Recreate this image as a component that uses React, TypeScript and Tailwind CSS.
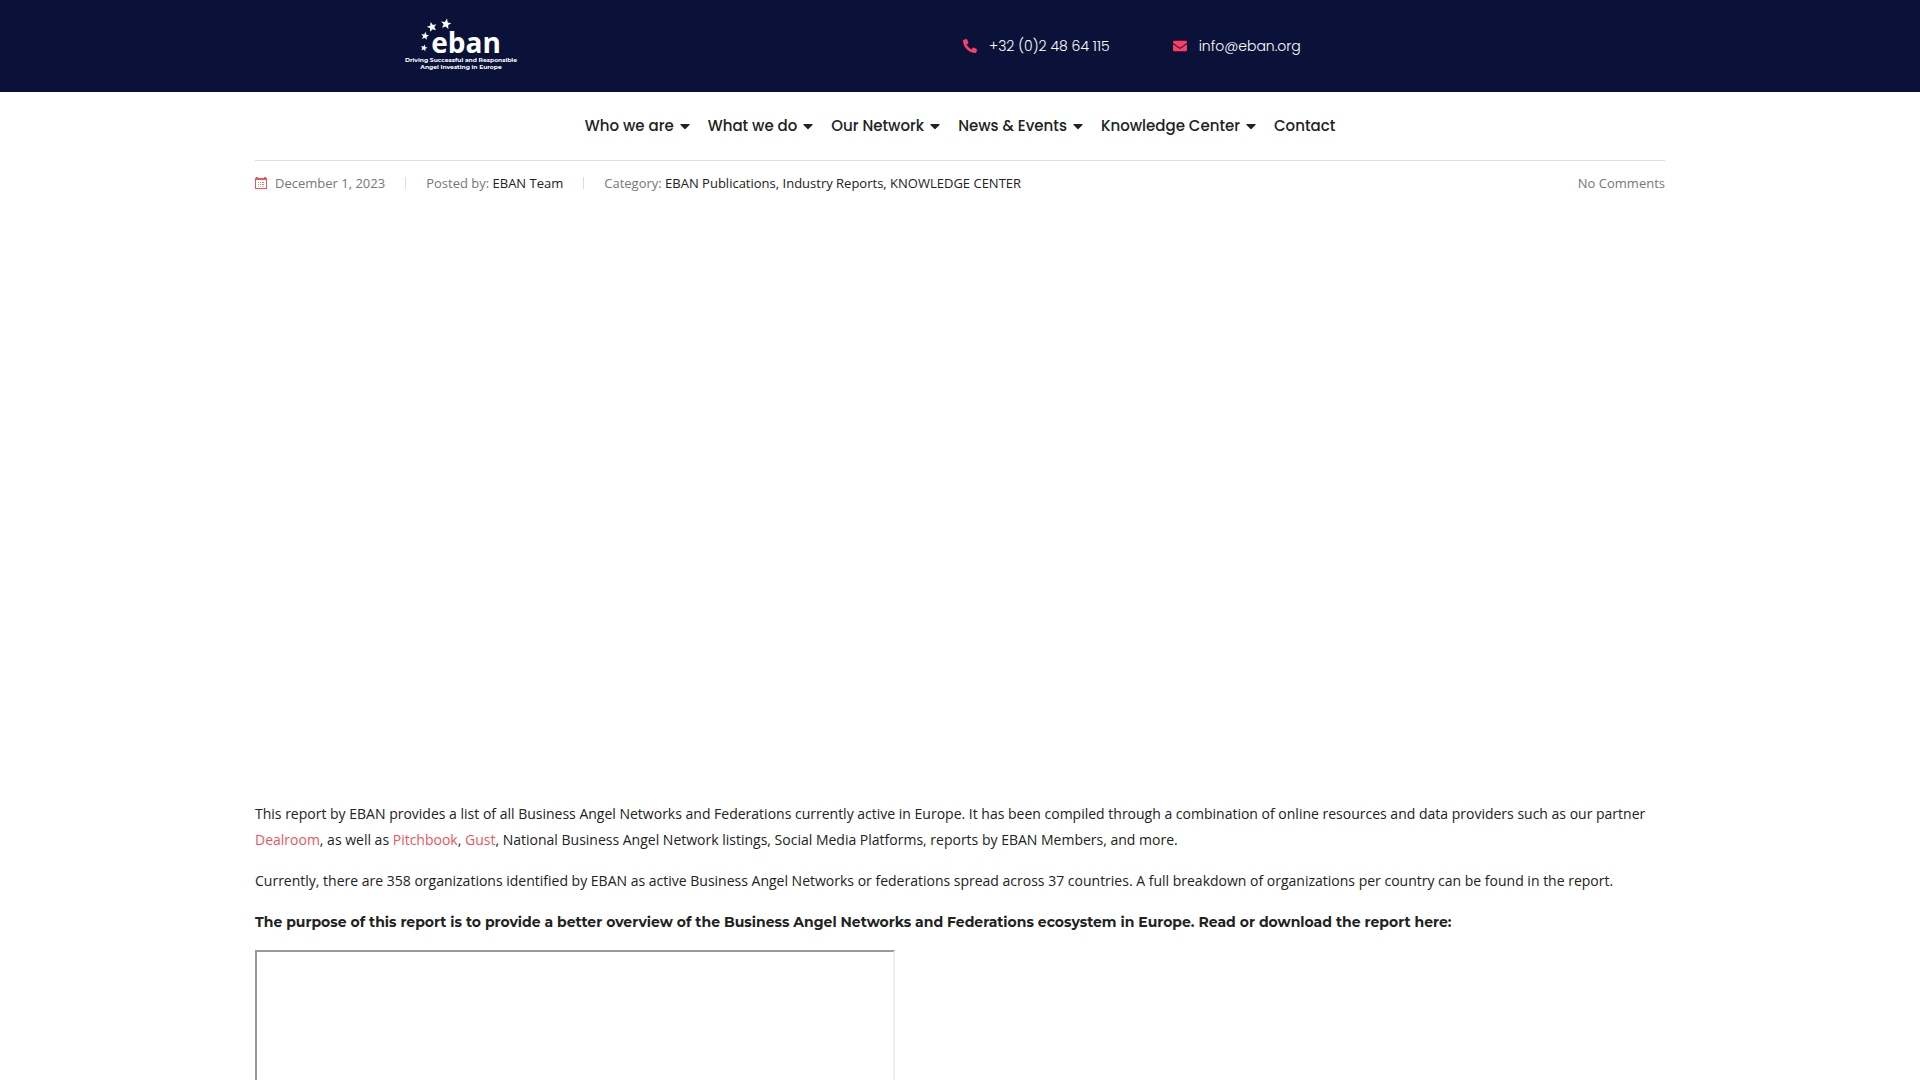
import React from "react";
import { FaCaretDown, FaEnvelope, FaPhoneAlt } from "react-icons/fa";

const menu = [
  { label: "Who we are", sub: true },
  { label: "What we do", sub: true },
  { label: "Our Network", sub: true },
  { label: "News & Events", sub: true },
  { label: "Knowledge Center", sub: true },
  { label: "Contact", sub: false },
];

const STAR =
  "M0 -10 L2.7 -3.4 L9.5 -3.1 L4.2 1.3 L5.9 8.1 L0 4.4 L-5.9 8.1 L-4.2 1.3 L-9.5 -3.1 L-2.7 -3.4 Z";

function Logo() {
  return (
    <svg width="116" height="56" viewBox="0 0 116 56" fill="#fff" role="img" aria-label="eban">
      <path d={STAR} transform="translate(42 6) rotate(10) scale(0.55)" />
      <path d={STAR} transform="translate(28 9) rotate(-15) scale(0.52)" />
      <path d={STAR} transform="translate(21 18) rotate(10) scale(0.42)" />
      <path d={STAR} transform="translate(20 30) rotate(15) scale(0.36)" />
      <text x="62" y="35" textAnchor="middle" className="font-['Open_Sans'] text-[28px] font-bold">
        eban
      </text>
      <text x="57" y="44" textAnchor="middle" className="font-['Montserrat','Inter'] text-[6px] font-bold">
        Driving Successful and Responsible
      </text>
      <text x="57" y="51" textAnchor="middle" className="font-['Montserrat','Inter'] text-[6px] font-bold">
        Angel Investing in Europe
      </text>
    </svg>
  );
}

function CalendarIcon() {
  return (
    <svg width="12" height="12" viewBox="0 0 12 12" fill="#eb5757" aria-hidden="true">
      <path d="M0 1h1v-1h2v1h6v-1h2v1h1v11H0ZM1 3v8h10V3Z" fillRule="evenodd" />
      <path
        opacity="0.8"
        d="M3 5h1v1h-1ZM5 5h1v1h-1ZM7 5h2v1h-2ZM3 7h1v1h-1ZM5 7h1v1h-1ZM7 7h2v1h-2ZM3 9h1v.5h-1ZM5 9h1v.5h-1ZM7 9h2v.5h-2Z"
      />
    </svg>
  );
}

const metaLink = "text-[#222222]";
const textLink = "text-[#eb5757]";

export default function App() {
  return (
    <div className="h-screen overflow-hidden bg-white font-['Open_Sans',sans-serif] text-[#222222]">
      <header className="bg-[#0a123a]">
        <div className="mx-auto grid h-[92px] max-w-[1140px] grid-cols-2 items-center">
          <a href="#home" className="pl-3.5">
            <Logo />
          </a>
          <div className="flex items-center gap-[63px] pl-[3px] font-['Poppins','Inter',sans-serif] text-[14px] font-light text-white">
            <a href="tel:+3224864115" className="flex items-center gap-3 whitespace-nowrap">
              <FaPhoneAlt className="size-3.5 text-[#fb3e61]" />
              +32 (0)2 48 64 115
            </a>
            <a href="mailto:info@eban.org" className="flex items-center gap-3 whitespace-nowrap">
              <FaEnvelope className="size-3.5 text-[#fb3e61]" />
              info@eban.org
            </a>
          </div>
        </div>
      </header>

      <div className="mx-auto max-w-[1410px]">
        <nav className="flex h-[68px] items-center justify-center gap-[18px] font-['Poppins','Inter',sans-serif] text-[15px] font-medium">
          {menu.map((item) => (
            <a key={item.label} href="#menu" className="flex items-center gap-1.5 whitespace-nowrap">
              {item.label}
              {item.sub && <FaCaretDown className="h-4 w-2.5" />}
            </a>
          ))}
        </nav>

        <div className="flex items-center border-t border-[#dddddd] pt-3 text-[13px] leading-5 text-[#777777]">
          <span className="flex items-center gap-2">
            <CalendarIcon />
            December 1, 2023
          </span>
          <span className="mx-5 h-3 border-l border-[#dddddd]" />
          <span>
            Posted by: <a href="#author" className={metaLink}>EBAN Team</a>
          </span>
          <span className="mx-5 h-3 border-l border-[#dddddd]" />
          <span>
            Category: <a href="#publications" className={metaLink}>EBAN Publications,</a>{" "}
            <a href="#reports" className={metaLink}>Industry Reports,</a>{" "}
            <a href="#knowledge" className={metaLink}>KNOWLEDGE CENTER</a>
          </span>
          <a href="#comments" className="ml-auto">No Comments</a>
        </div>

        <main className="mt-[608px] flex flex-col gap-[15px] text-[14px] leading-[26px]">
          <p>
            This report by EBAN provides a list of all Business Angel Networks and Federations currently active in
            Europe. It has been compiled through a combination of online resources and data providers such as our
            partner <a href="#dealroom" className={textLink}>Dealroom</a>, as well as{" "}
            <a href="#pitchbook" className={textLink}>Pitchbook</a>,{" "}
            <a href="#gust" className={textLink}>Gust</a>, National Business Angel Network listings, Social Media
            Platforms, reports by EBAN Members, and more.
          </p>
          <p>
            Currently, there are 358 organizations identified by EBAN as active Business Angel Networks or federations
            spread across 37 countries. A full breakdown of organizations per country can be found in the report.
          </p>
          <p className="font-['Montserrat','Inter',sans-serif] font-bold">
            The purpose of this report is to provide a better overview of the Business Angel Networks and Federations
            ecosystem in Europe. Read or download the report here:
          </p>
          <iframe
            title="Report"
            className="h-[400px] w-[640px] border-2 border-t-[#9a9a9a] border-r-[#eeeeee] border-b-[#eeeeee] border-l-[#9a9a9a]"
          />
        </main>
      </div>
    </div>
  );
}
